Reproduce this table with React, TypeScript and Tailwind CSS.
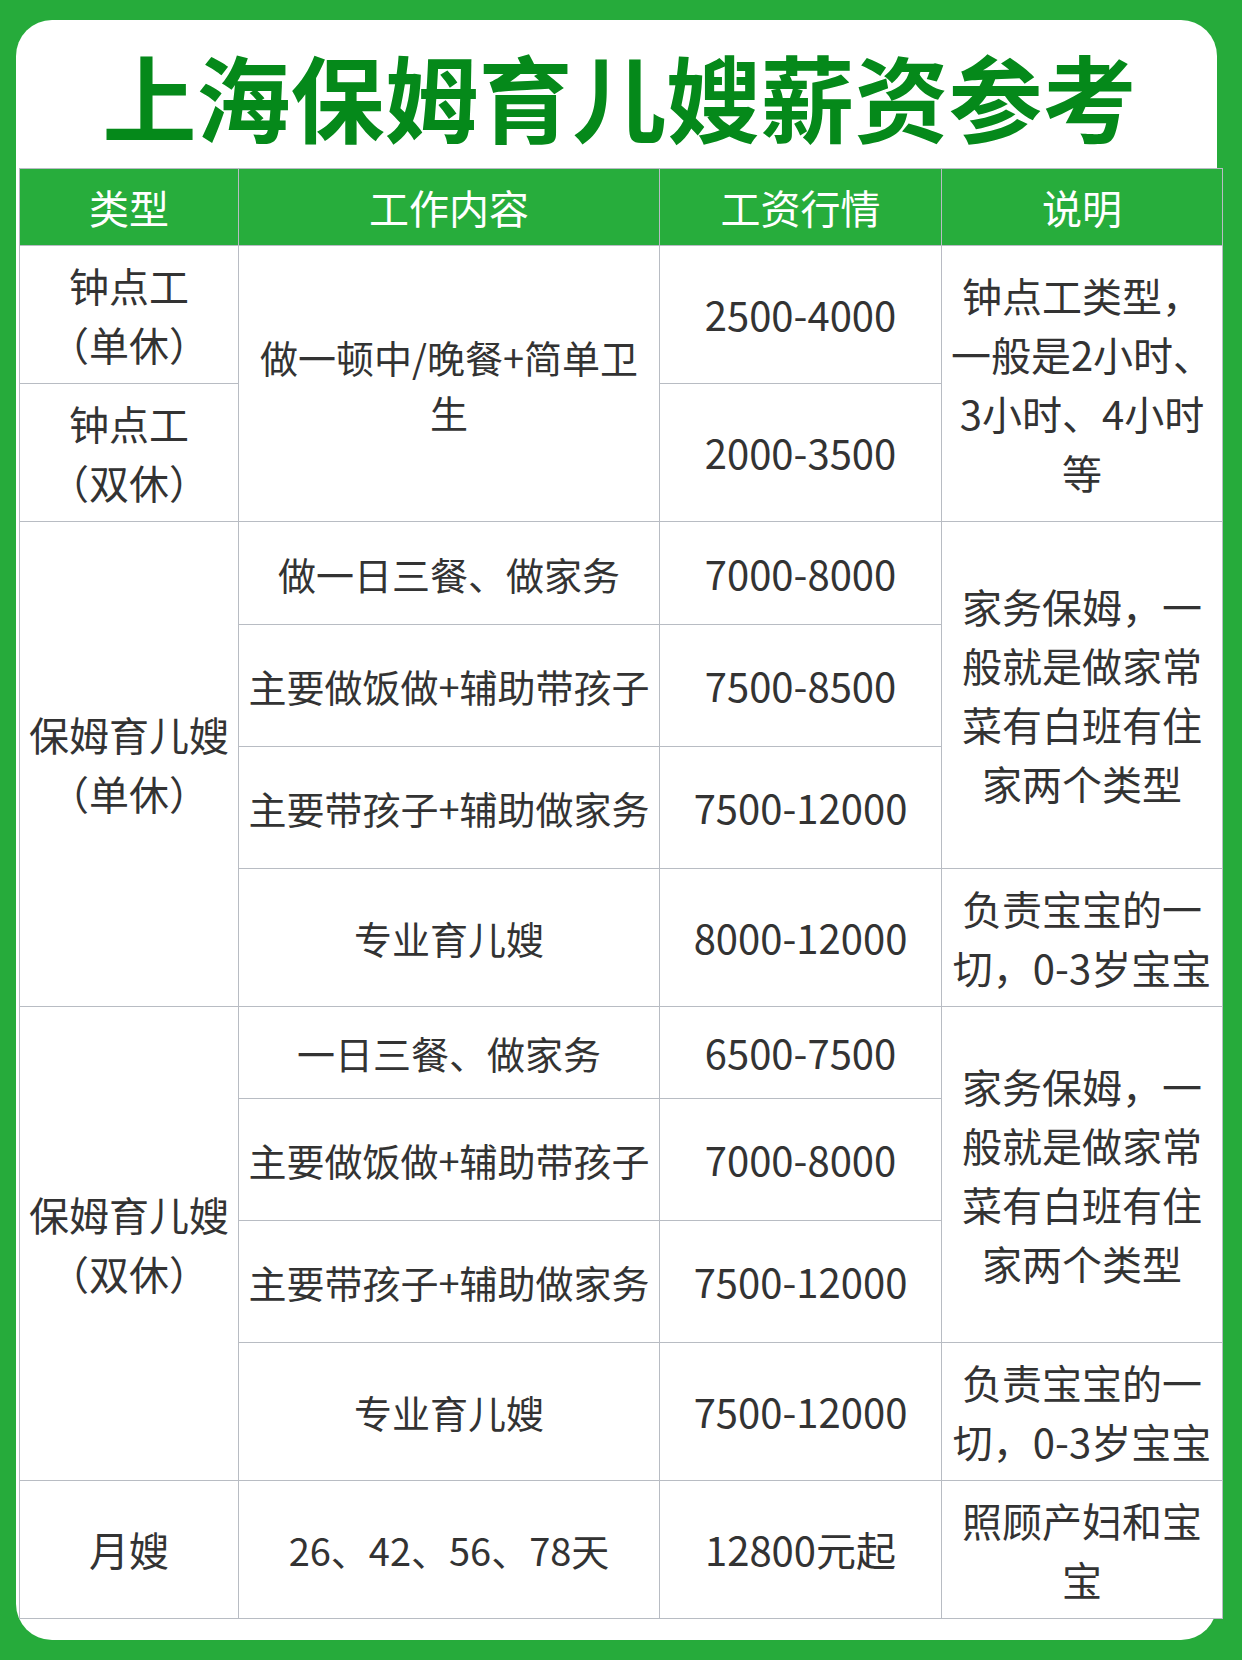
type Cell = {
  lines: string[]
  span?: string
  small?: boolean
}

const headers = ['类型', '工作内容', '工资行情', '说明']

const housework = ['家务保姆，一', '般就是做家常', '菜有白班有住', '家两个类型']
const baby = ['负责宝宝的一', '切，0-3岁宝宝']

// cells in reading order, grid auto-placement fills around the row spans
const cells: Cell[] = [
  { lines: ['钟点工', '（单休）'] },
  { lines: ['做一顿中/晚餐+简单卫', '生'], span: 'row-span-2', small: true },
  { lines: ['2500-4000'] },
  { lines: ['钟点工类型，', '一般是2小时、', '3小时、4小时', '等'], span: 'row-span-2' },
  { lines: ['钟点工', '（双休）'] },
  { lines: ['2000-3500'] },

  { lines: ['保姆育儿嫂', '（单休）'], span: 'row-span-4' },
  { lines: ['做一日三餐、做家务'], small: true },
  { lines: ['7000-8000'] },
  { lines: housework, span: 'row-span-3' },
  { lines: ['主要做饭做+辅助带孩子'], small: true },
  { lines: ['7500-8500'] },
  { lines: ['主要带孩子+辅助做家务'], small: true },
  { lines: ['7500-12000'] },
  { lines: ['专业育儿嫂'], small: true },
  { lines: ['8000-12000'] },
  { lines: baby },

  { lines: ['保姆育儿嫂', '（双休）'], span: 'row-span-4' },
  { lines: ['一日三餐、做家务'], small: true },
  { lines: ['6500-7500'] },
  { lines: housework, span: 'row-span-3' },
  { lines: ['主要做饭做+辅助带孩子'], small: true },
  { lines: ['7000-8000'] },
  { lines: ['主要带孩子+辅助做家务'], small: true },
  { lines: ['7500-12000'] },
  { lines: ['专业育儿嫂'], small: true },
  { lines: ['7500-12000'] },
  { lines: baby },

  { lines: ['月嫂'] },
  { lines: ['26、42、56、78天'], small: true },
  { lines: ['12800元起'] },
  { lines: ['照顾产妇和宝', '宝'] },
]

export default function App() {
  return (
    <div className="w-[1242px] h-[1660px] bg-[#26ab3b] pt-[20px] pl-[16px] font-['Noto_Sans_CJK_SC','Noto_Sans',sans-serif]">
      <div className="w-[1201px] h-[1620px] rounded-[36px] bg-white">
        <div className="h-[148px] flex items-center justify-center pl-[6px] pt-[2px]">
          <h1 className="text-[94px] leading-none font-bold text-[#05891a]">上海保姆育儿嫂薪资参考</h1>
        </div>
        <div className="ml-[3px] w-[1204px] grid grid-cols-[218px_420px_281px_280px] grid-rows-[76px_137px_137px_102px_121px_121px_137px_91px_121px_121px_137px_137px] gap-px p-px bg-[#b8bcc3]">
          {headers.map((h) => (
            <div key={h} className="flex items-center justify-center bg-[#27ad3c] text-white text-[40px] leading-none">
              {h}
            </div>
          ))}
          {cells.map((c, i) => (
            <div
              key={i}
              className={`flex flex-col items-center justify-center bg-white text-center text-[#333333] ${
                c.small ? 'text-[38px] leading-[55px]' : 'text-[40px] leading-[59px]'
              } ${c.span ?? ''}`}
            >
              {c.lines.map((l, j) => (
                <span key={j} className="whitespace-nowrap">
                  {l}
                </span>
              ))}
            </div>
          ))}
        </div>
      </div>
    </div>
  )
}
